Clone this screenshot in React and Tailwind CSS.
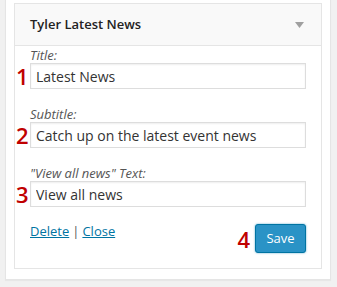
export default function App() {
  const fields = [
    { n: "1", label: "Title:", value: "Latest News" },
    { n: "2", label: "Subtitle:", value: "Catch up on the latest event news" },
    { n: "3", label: "\"View all news\" Text:", value: "View all news" },
  ];

  return (
    <div className="h-[287px] w-[337px] overflow-hidden bg-[#f1f1f1] pl-[5px] font-['Open_Sans',sans-serif]">
      <div className="-mt-px h-[281px] w-[326px] border border-[#e5e5e5] bg-white pl-[8px] pt-[3px] shadow-[0_1px_1px_rgba(0,0,0,0.04)]">
        <div className="w-[308px] border border-[#e5e5e5] bg-white">
          <div className="flex h-[42px] items-center justify-between border-b border-[#e5e5e5] bg-[#f9f9f9] pl-[15px] pr-[17px]">
            <h4 className="text-[13px] font-semibold text-[#222]">Tyler Latest News</h4>
            <svg width="9" height="6" viewBox="0 0 9 6" className="mt-[1px]">
              <path d="M0 0h9L4.5 6z" fill="#a0a0a0" />
            </svg>
          </div>

          <div className="pb-[15px] pr-[15px] pt-[1px]">
            {fields.map((f, i) => (
              <div key={f.n} className={i > 0 ? "mt-[17px]" : ""}>
                <label className="block pl-[15px] text-[13px] italic leading-[16px] text-[#555]">
                  {f.label}
                </label>
                <div className="flex items-center">
                  <span className="w-[15px] pl-px text-[22px] font-semibold leading-none text-[#c00000]">{f.n}</span>
                  <input
                    readOnly
                    value={f.value}
                    className="h-[26px] w-[276px] border border-[#ddd] bg-white px-[5px] text-[14px] text-[#333] shadow-[inset_0_1px_2px_rgba(0,0,0,0.07)] outline-none"
                  />
                </div>
              </div>
            ))}

            <div className="mt-[17px] flex items-center justify-between pl-[15px]">
              <div className="mt-[-13px] text-[13px] text-[#555]">
                <a href="#" className="text-[#0074a2] underline">Delete</a>
                <span className="mx-[3px]">|</span>
                <a href="#" className="text-[#0074a2] underline">Close</a>
              </div>
              <div className="flex items-center gap-[5px]">
                <span className="text-[22px] font-semibold leading-none text-[#c00000]">4</span>
                <button className="h-[29px] w-[51px] rounded-[3px] border border-[#0074a2] bg-[#2a93c6] text-[13px] text-white shadow-[0_0_2px_rgba(30,140,190,0.8)]">
                  Save
                </button>
              </div>
            </div>
          </div>
        </div>
      </div>
    </div>
  );
}
